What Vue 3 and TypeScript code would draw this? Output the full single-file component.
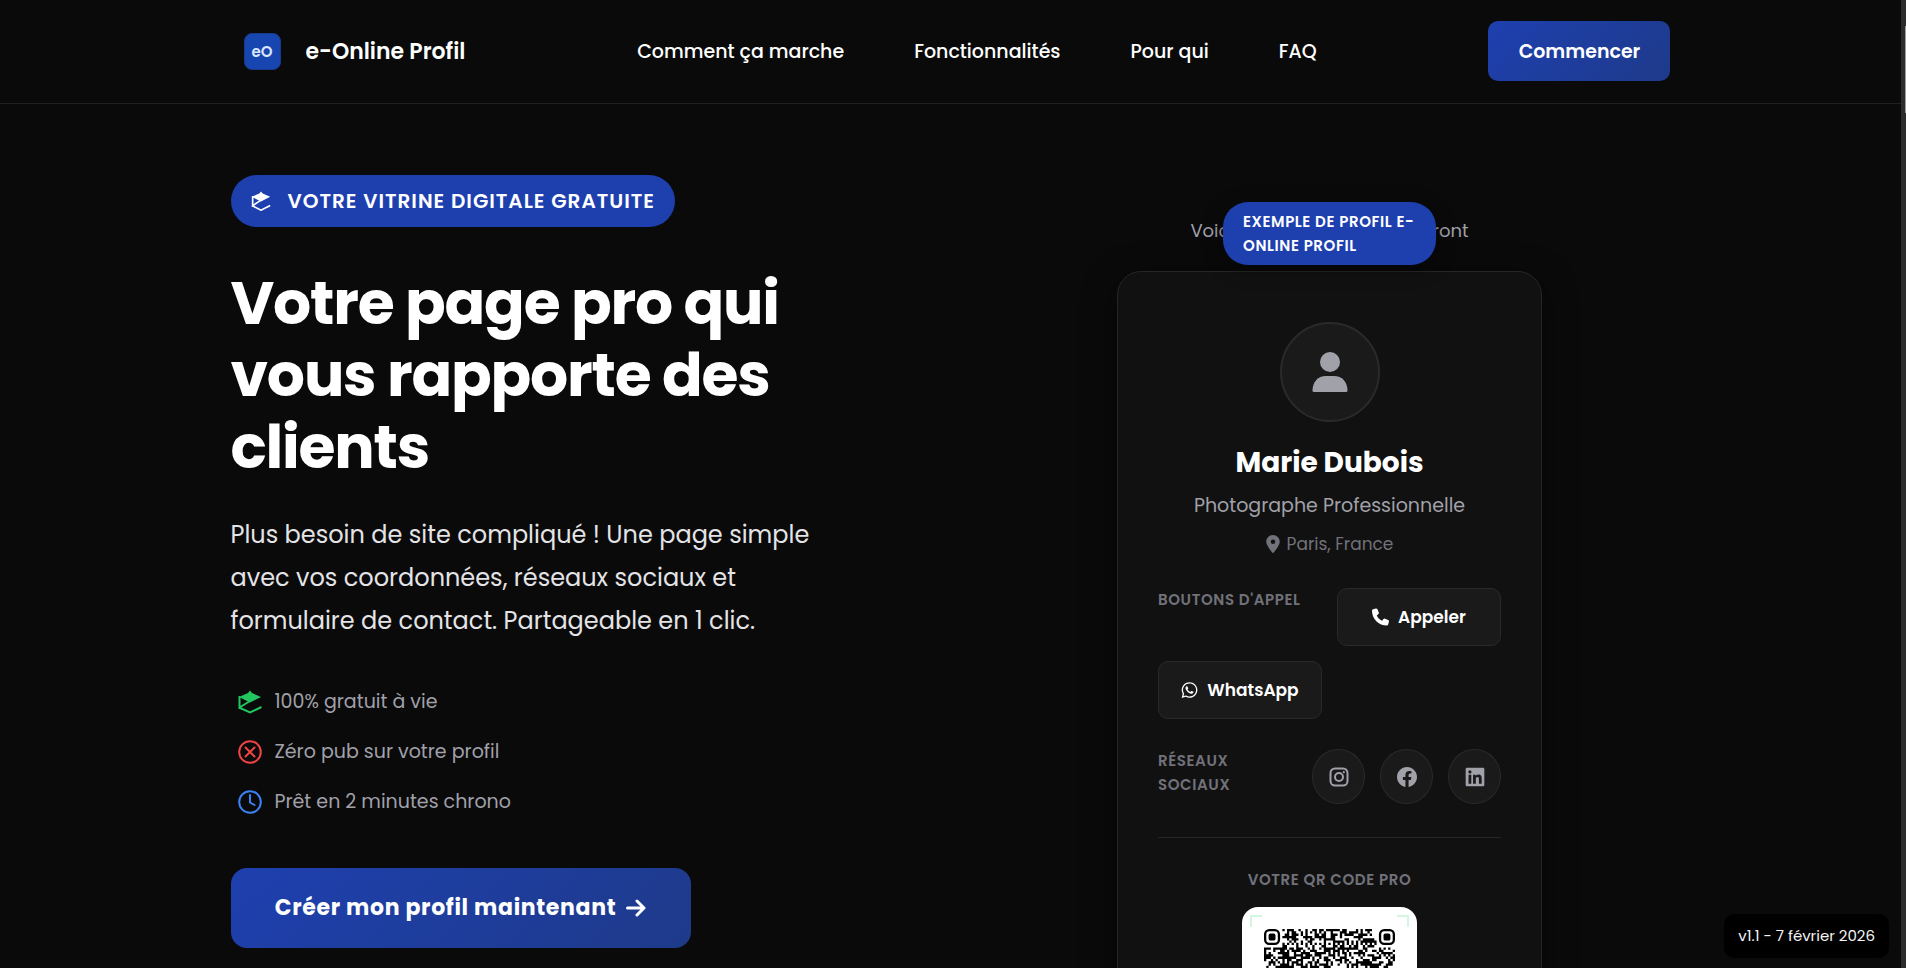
<script setup lang="ts">
import { computed } from 'vue'

interface Perk { text: string; tone: string; icon: 'box' | 'cross' | 'clock' }

const links: string[] = ['Comment ça marche', 'Fonctionnalités', 'Pour qui', 'FAQ']
const perks: Perk[] = [
  { text: '100% gratuit à vie', tone: 'green', icon: 'box' },
  { text: 'Zéro pub sur votre profil', tone: 'red', icon: 'cross' },
  { text: 'Prêt en 2 minutes chrono', tone: 'blue', icon: 'clock' },
]

const SIZE = 57

function inFinder(x: number, y: number): boolean {
  return (x < 8 && y < 8) || (x > SIZE - 9 && y < 8) || (x < 8 && y > SIZE - 9)
}

function alignment(x: number, y: number): boolean | null {
  for (const [cx, cy] of [[28, 6], [6, 28], [28, 28], [50, 28], [28, 50], [50, 50]]) {
    const d = Math.max(Math.abs(x - cx), Math.abs(y - cy))
    if (d <= 2) return d !== 1
  }
  return null
}

const qrPath = computed<string>(() => {
  let seed = 20260207
  let d = ''
  for (let y = 0; y < SIZE; y++) {
    for (let x = 0; x < SIZE; x++) {
      seed = (Math.imul(seed, 1664525) + 1013904223) >>> 0
      if (inFinder(x, y)) continue
      const fixed = alignment(x, y)
      const dark = fixed ?? (y === 6 || x === 6 ? (x + y) % 2 === 0 : seed / 4294967296 < 0.52)
      if (dark) d += `M${x} ${y}h1v1h-1z`
    }
  }
  return d
})
</script>

<template>
  <div class="page">
    <header class="header">
      <div class="wrap header-row">
        <a class="brand" href="#">
          <span class="brand-mark">eO</span>
          <span class="brand-name">e-Online Profil</span>
        </a>
        <nav class="nav">
          <a v-for="link in links" :key="link" href="#">{{ link }}</a>
        </nav>
        <button class="start" type="button">Commencer</button>
      </div>
    </header>

    <main class="wrap hero">
      <section class="pitch">
        <p class="pill">
          <svg class="pill-icon" viewBox="0 0 24 24" aria-hidden="true">
            <path d="M12 .5 14 3 23 7 12 12.500 1 7 10 3Z" fill="currentColor" />
            <path d="M2 6V17.500L12 11M1 17.500 12 23 23 17.500" fill="none" stroke="currentColor" stroke-width="2" />
          </svg>
          Votre vitrine digitale gratuite
        </p>
        <h1>Votre page pro qui<br />vous rapporte des<br />clients</h1>
        <p class="lead">Plus besoin de site compliqué ! Une page simple<br />avec vos coordonnées, réseaux sociaux et<br />formulaire de contact. Partageable en 1 clic.</p>
        <ul class="perks">
          <li v-for="perk in perks" :key="perk.text">
            <svg :class="['perk-icon', perk.tone]" viewBox="0 0 24 24" fill="none" stroke="currentColor" stroke-width="2" stroke-linecap="round" aria-hidden="true">
              <g v-if="perk.icon === 'box'" stroke-linecap="butt">
                <path d="M12 .5 14 3 23 7 12 12.500 1 7 10 3Z" fill="currentColor" stroke="none" />
                <path d="M1.500 6V17.500L12 11M1 17.500 12 22.500 23.500 17" />
              </g>
              <template v-else>
                <circle cx="12" cy="12" r="10.800" />
                <path v-if="perk.icon === 'cross'" d="M7.500 7.500l9 9M16.500 7.500l-9 9" />
                <path v-else d="M12 5v7.500l4.500 2.500" />
              </template>
            </svg>
            {{ perk.text }}
          </li>
        </ul>
        <button class="cta" type="button">
          Créer mon profil maintenant
          <svg viewBox="0 0 20 18" fill="none" stroke="currentColor" stroke-width="3" stroke-linecap="round" stroke-linejoin="round" aria-hidden="true">
            <path d="M1.500 9h16.500M11 2l7 7-7 7" />
          </svg>
        </button>
      </section>

      <section class="demo">
        <div class="stage">
          <p class="caption">Voici ce que vos clients verront</p>
          <span class="tag">Exemple de profil e-<br />Online Profil</span>
          <article class="card">
            <div class="avatar">
              <svg viewBox="0 0 36 40" fill="currentColor" aria-hidden="true">
                <circle cx="18" cy="10" r="10" />
                <path d="M2 40a1.500 1.500 0 0 1-1.500-1.500C.5 30 6 24 14 24h8c8 0 13.500 6 13.500 14.500A1.500 1.500 0 0 1 34 40Z" />
              </svg>
            </div>
            <h2>Marie Dubois</h2>
            <p class="job">Photographe Professionnelle</p>
            <p class="place">
              <svg viewBox="0 0 384 512" fill="currentColor" aria-hidden="true">
                <path d="M215.700 499.200C267 435 384 279.400 384 192 384 86 298 0 192 0S0 86 0 192c0 87.400 117 243 168.300 307.200 12.300 15.300 35.100 15.300 47.400 0ZM192 128a64 64 0 1 1 0 128 64 64 0 1 1 0-128Z" />
              </svg>
              Paris, France
            </p>
            <div class="calls">
              <span class="label">Boutons d'appel</span>
              <button type="button">
                <svg viewBox="0 0 512 512" fill="currentColor" aria-hidden="true">
                  <path d="M164.900 24.600c-7.700-18.600-28-28.500-47.400-23.200l-88 24C12.100 30.200 0 46 0 64c0 247.400 200.600 448 448 448 18 0 33.800-12.100 38.600-29.500l24-88c5.300-19.400-4.600-39.700-23.200-47.400l-96-40c-16.300-6.800-35.200-2.100-46.300 11.600L304.700 368C234.300 334.700 177.300 277.700 144 207.300L193.300 167c13.700-11.200 18.400-30 11.600-46.300l-40-96Z" />
                </svg>
                Appeler
              </button>
              <button type="button">
                <svg viewBox="0 0 448 512" fill="currentColor" aria-hidden="true">
                  <path d="M380.900 97.100C339 55.100 283.200 32 223.900 32c-122.400 0-222 99.600-222 222 0 39.100 10.200 77.300 29.600 111L0 480l117.700-30.900c32.400 17.700 68.900 27 106.100 27h.1c122.300 0 224.100-99.600 224.100-222 0-59.300-25.200-115-67.100-157zm-157 341.600c-33.200 0-65.700-8.900-94-25.700l-6.700-4-69.800 18.300L72 359.200l-4.400-7c-18.500-29.400-28.200-63.300-28.200-98.200 0-101.700 82.800-184.500 184.600-184.500 49.300 0 95.600 19.200 130.400 54.100 34.800 34.900 56.200 81.200 56.100 130.500 0 101.800-84.900 184.600-186.600 184.600zm101.200-138.200c-5.500-2.800-32.800-16.200-37.900-18-5.100-1.900-8.800-2.800-12.500 2.800-3.700 5.600-14.300 18-17.600 21.800-3.200 3.700-6.500 4.200-12 1.400-32.600-16.300-54-29.100-75.500-66-5.700-9.800 5.700-9.100 16.300-30.300 1.800-3.700.9-6.900-.5-9.700-1.400-2.800-12.500-30.100-17.100-41.200-4.500-10.800-9.100-9.300-12.500-9.500-3.200-.2-6.900-.2-10.600-.2-3.700 0-9.700 1.400-14.800 6.900-5.100 5.600-19.400 19-19.400 46.300 0 27.300 19.900 53.700 22.600 57.400 2.800 3.700 39.100 59.700 94.800 83.800 35.200 15.200 49 16.500 66.600 13.900 10.700-1.600 32.800-13.400 37.400-26.400 4.600-13 4.600-24.100 3.200-26.400-1.300-2.500-5-3.900-10.500-6.600z" />
                </svg>
                WhatsApp
              </button>
            </div>
            <div class="networks">
              <span class="label">Réseaux sociaux</span>
              <div class="circles">
                <a href="#" aria-label="Instagram">
                  <svg viewBox="0 0 20 20" fill="none" stroke="currentColor" stroke-width="2" aria-hidden="true">
                    <rect x="1.500" y="1.500" width="17" height="17" rx="4.500" />
                    <circle cx="10" cy="10" r="4" />
                    <circle cx="14.800" cy="5.200" r="1.100" fill="currentColor" stroke="none" />
                  </svg>
                </a>
                <a href="#" aria-label="Facebook">
                  <svg viewBox="0 0 24 24" fill="currentColor" aria-hidden="true">
                    <path d="M24 12.073C24 5.446 18.627.073 12 .073S0 5.446 0 12.073c0 5.990 4.388 10.954 10.125 11.854v-8.385H7.078v-3.470h3.047V9.430c0-3.007 1.792-4.669 4.533-4.669 1.312 0 2.686.235 2.686.235v2.953H15.830c-1.491 0-1.956.925-1.956 1.874v2.250h3.328l-.532 3.470h-2.796v8.385C19.612 23.027 24 18.062 24 12.073Z" />
                  </svg>
                </a>
                <a href="#" aria-label="LinkedIn">
                  <svg viewBox="-16 16 480 480" fill="currentColor" aria-hidden="true">
                    <path d="M416 32H31.900C14.300 32 0 46.500 0 64.300v383.400C0 465.500 14.300 480 31.900 480H416c17.600 0 32-14.500 32-32.300V64.300c0-17.800-14.400-32.300-32-32.300zM135.400 416H69V202.200h66.500V416zm-33.200-243c-21.300 0-38.500-17.300-38.500-38.500S80.900 96 102.200 96c21.200 0 38.500 17.300 38.500 38.500 0 21.300-17.200 38.500-38.500 38.500zm282.100 243h-66.400V312c0-24.800-.5-56.700-34.500-56.700-34.600 0-39.900 27-39.900 54.900V416h-66.400V202.200h63.700v29.200h.9c8.900-16.800 30.600-34.500 62.900-34.500 67.200 0 79.700 44.300 79.700 101.900V416z" />
                  </svg>
                </a>
              </div>
            </div>
            <div class="qr">
              <span class="label">Votre QR code pro</span>
              <div class="qr-box">
                <svg viewBox="0 0 175 175" role="img" aria-label="QR code">
                  <path d="M20 9H9v11M155 9h11v11M9 155v11h11M166 155v11h-11" fill="none" stroke="#d3f6e0" stroke-width="2" />
                  <svg x="22" y="22" width="131" height="131" viewBox="0 0 57 57">
                    <path :d="qrPath" fill="#000" />
                    <g v-for="p in [[0, 0], [50, 0], [0, 50]]" :key="p.join()" :transform="`translate(${p[0]} ${p[1]})`">
                      <rect x=".5" y=".5" width="6" height="6" rx="1.800" fill="none" stroke="#000" />
                      <rect x="2" y="2" width="3" height="3" rx=".8" />
                    </g>
                  </svg>
                </svg>
              </div>
            </div>
          </article>
        </div>
      </section>
    </main>

    <div class="version">v1.1 - 7 février 2026</div>
    <div class="scroll" aria-hidden="true"><div class="thumb"></div></div>
  </div>
</template>

<style>
body {
  background: #0a0a0a;
  overflow: hidden;
}
</style>

<style scoped>
* {
  box-sizing: border-box;
}
.page {
  height: 100vh;
  overflow: hidden;
  padding-right: 5px;
  background: #0a0a0a;
  color: #fff;
  font-family: Poppins, Inter, "Open Sans", sans-serif;
}
h1, h2, p, ul {
  margin: 0;
  padding: 0;
}
a {
  color: inherit;
  text-decoration: none;
}
button {
  font: inherit;
  color: #fff;
  border: 0;
  cursor: pointer;
}
.wrap {
  width: 100%;
  max-width: 1440px;
  margin: 0 auto;
}
.header {
  border-bottom: 1px solid #1f1f1f;
}
.header-row {
  height: 103px;
  padding-bottom: 1px;
  display: flex;
  align-items: center;
  justify-content: space-between;
}
.brand {
  display: flex;
  align-items: center;
  gap: 25px;
  padding-left: 13px;
}
.brand-mark {
  width: 37px;
  height: 37px;
  border: 1px solid #173a8c;
  border-radius: 8px;
  background: #1846b0;
  color: #dbe7ff;
  display: grid;
  place-items: center;
  font-size: 15px;
  font-weight: 600;
}
.brand-name {
  font-size: 22px;
  font-weight: 600;
}
.nav {
  display: flex;
  gap: 70px;
  font-size: 19px;
  font-weight: 500;
}
.start {
  width: 182px;
  height: 60px;
  border-radius: 10px;
  background: linear-gradient(135deg, #1e40af, #1e3a8a);
  font-size: 19px;
  font-weight: 600;
}
.hero {
  display: grid;
  grid-template-columns: 1fr 1fr;
  gap: 76px;
}
.pitch {
  padding-top: 71px;
  display: flex;
  flex-direction: column;
  align-items: flex-start;
}
.pill {
  height: 52px;
  display: flex;
  align-items: center;
  gap: 17px;
  padding: 0 20px;
  border-radius: 26px;
  background: #1e40af;
  font-size: 20px;
  font-weight: 600;
  letter-spacing: 1px;
  text-transform: uppercase;
  white-space: nowrap;
}
.pill-icon {
  width: 20px;
  height: 20px;
}
h1 {
  margin-top: 40px;
  font-size: 60px;
  line-height: 72px;
  font-weight: 700;
  letter-spacing: -0.02em;
  white-space: nowrap;
}
.lead {
  margin-top: 30px;
  font-size: 24px;
  line-height: 1.8;
  color: #e4e4e7;
  white-space: nowrap;
}
.perks {
  margin-top: 44px;
  padding-left: 7px;
  list-style: none;
  color: #a1a1aa;
  font-size: 19px;
  line-height: 30px;
  display: flex;
  flex-direction: column;
  gap: 20px;
}
.perks li {
  display: flex;
  align-items: center;
  gap: 13px;
}
.perk-icon {
  width: 24px;
  height: 24px;
}
.green { color: #22c55e; }
.red { color: #ef4444; }
.blue { color: #3b82f6; }
.cta {
  margin-top: 51px;
  width: 460px;
  height: 80px;
  border-radius: 16px;
  background: linear-gradient(135deg, #1e40af, #1e3a8a);
  display: flex;
  align-items: center;
  justify-content: center;
  gap: 10px;
  font-size: 22px;
  font-weight: 700;
  letter-spacing: 0.03em;
}
.cta svg {
  width: 20px;
  height: 18px;
}
.demo {
  display: flex;
  justify-content: center;
  padding-top: 111px;
}
.stage {
  position: relative;
  width: 425px;
}
.caption {
  height: 56px;
  line-height: 32px;
  text-align: center;
  font-size: 18px;
  color: #a1a1aa;
}
.tag {
  position: absolute;
  top: -13px;
  left: 106px;
  width: 213px;
  height: 63px;
  padding: 8px 0 0 20px;
  border-radius: 25px;
  background: #1e40af;
  box-shadow: 0 4px 20px rgba(0, 0, 0, 0.4);
  font-size: 15px;
  line-height: 24px;
  font-weight: 600;
  letter-spacing: 0.04em;
  text-transform: uppercase;
  white-space: nowrap;
}
.card {
  padding: 50px 40px 40px;
  border: 1px solid #262626;
  border-radius: 24px;
  background: #111;
  box-shadow: 0 8px 32px rgba(0, 0, 0, 0.5);
  display: flex;
  flex-direction: column;
  align-items: center;
}
.avatar {
  width: 100px;
  height: 100px;
  border: 2px solid #2a2a2a;
  border-radius: 50%;
  background: #1a1a1a;
  color: #a1a1aa;
  display: grid;
  place-items: center;
}
.avatar svg {
  width: 36px;
  height: 40px;
}
h2 {
  margin-top: 20px;
  font-size: 28px;
  line-height: 42px;
  font-weight: 700;
}
.job {
  margin-top: 7px;
  font-size: 19px;
  line-height: 30px;
  color: #a1a1aa;
}
.place {
  display: flex;
  align-items: center;
  gap: 7px;
  margin-top: 9px;
  font-size: 17px;
  line-height: 28px;
  color: #71717a;
}
.place svg {
  width: 14px;
  height: 18px;
}
.label {
  font-size: 15px;
  line-height: 24px;
  font-weight: 600;
  letter-spacing: 0.04em;
  text-transform: uppercase;
  color: #71717a;
}
.calls {
  width: 100%;
  margin-top: 30px;
  display: grid;
  grid-template-columns: 1fr 1fr;
  gap: 15px;
}
.calls button {
  height: 58px;
  border: 1px solid #2a2a2a;
  border-radius: 10px;
  background: #1a1a1a;
  display: flex;
  align-items: center;
  justify-content: center;
  gap: 9px;
  font-size: 17px;
  font-weight: 600;
}
.calls svg {
  width: 17px;
  height: 18px;
}
.networks {
  width: 100%;
  margin-top: 30px;
  display: flex;
  justify-content: space-between;
}
.networks .label {
  width: 110px;
}
.circles {
  display: flex;
  gap: 15px;
}
.circles a {
  width: 53px;
  height: 55px;
  border: 1px solid #2a2a2a;
  border-radius: 50%;
  background: #1a1a1a;
  color: #a1a1aa;
  display: grid;
  place-items: center;
}
.circles svg {
  width: 20px;
  height: 20px;
}
.qr {
  width: 100%;
  margin-top: 33px;
  padding-top: 30px;
  border-top: 1px solid #262626;
  display: flex;
  flex-direction: column;
  align-items: center;
  gap: 15px;
}
.qr-box {
  width: 175px;
  height: 175px;
  border-radius: 16px;
  background: #fff;
}
.qr-box > svg {
  display: block;
  width: 100%;
}
.version {
  position: fixed;
  right: 17px;
  bottom: 10px;
  padding: 10px 14px;
  border-radius: 10px;
  background: #000;
  color: #f4f4f5;
  font-size: 15px;
  line-height: 24px;
  font-weight: 400;
}
.scroll {
  position: fixed;
  top: 0;
  right: 0;
  bottom: 0;
  width: 5px;
  padding: 26px 0 0 4px;
  background: #2c2c2c;
}
.thumb {
  height: 87px;
  background: #9f9f9f;
}
</style>
